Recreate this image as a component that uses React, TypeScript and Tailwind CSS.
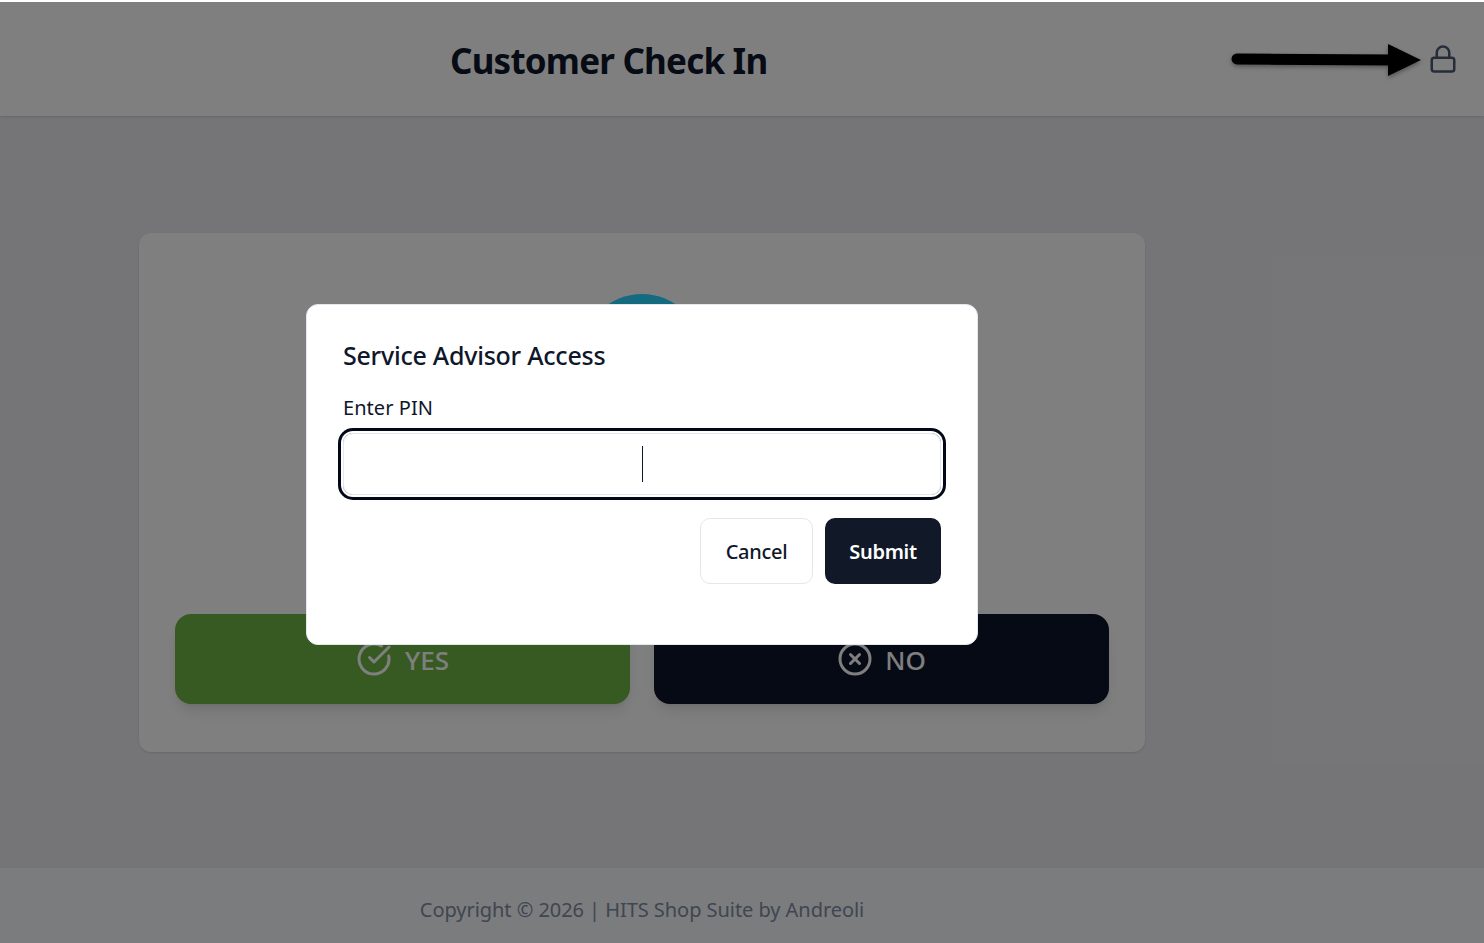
import React from 'react';
import { CircleCheckBig, CircleX, Lock } from 'lucide-react';

const FONT = "font-['Noto_Sans','Open_Sans',sans-serif]";

export default function App() {
  return (
    <div className={`relative w-[1484px] h-[943px] overflow-hidden flex flex-col bg-[#ebebef] ${FONT}`}>
      {/* page under the dialog */}
      <header className="h-[116px] shrink-0 flex items-center justify-between bg-white pl-[450px] pr-[26px] shadow-sm">
        <h1 className="text-[35px] font-bold leading-none text-[#0f172a] tracking-[-0.8px] pt-1">Customer Check In</h1>
        <Lock className="w-[30px] h-[30px] mt-[2px] text-[#4b5a70]" strokeWidth={2} />
      </header>

      <main className="flex-1 pl-[139px] pt-[117px]">
        <div className="w-[1006px] h-[519px] rounded-xl bg-white shadow-sm flex flex-col px-9 pb-12 pt-[61px]">
          <div className="self-center w-[120px] h-[120px] rounded-full bg-[#28d6ff]" />
          <div className="mt-auto grid grid-cols-2 gap-6">
            <button className="h-[90px] rounded-2xl bg-[#6eb444] text-white text-[26px] font-medium shadow-lg flex items-center justify-center gap-[13px]">
              <CircleCheckBig className="w-9 h-9" strokeWidth={2} />
              <span className="pt-[2px]">YES</span>
            </button>
            <button className="h-[90px] rounded-2xl bg-[#0c1428] text-white text-[26px] font-medium shadow-lg flex items-center justify-center gap-3">
              <CircleX className="w-9 h-9" strokeWidth={2} />
              <span className="pt-[2px]">NO</span>
            </button>
          </div>
        </div>
      </main>

      <footer className="h-[75px] shrink-0 w-full bg-[#f7f8fa]">
        <p className="w-[1284px] h-full flex items-center justify-center text-[20px] text-[#7f8ca3] tracking-[-0.05px] pt-2">
          Copyright © 2026 | HITS Shop Suite by Andreoli
        </p>
      </footer>

      {/* dim layer and dialog */}
      <div className="absolute inset-0 top-[2px] bg-black/50 pl-[306px] pt-[302px]">
        <div className="w-[672px] h-[341px] rounded-xl bg-white border border-slate-200 pt-[32px] pl-[36px] pr-[36px]">
          <h2 className="text-[25px] font-medium leading-9 text-[#0f172a] tracking-[-0.24px]">Service Advisor Access</h2>
          <label className="block mt-[23px] text-[20px] leading-6 text-[#0f172a] tracking-[0.05px]">Enter PIN</label>
          <div className="mt-[13px] h-[62px] rounded-[10px] border border-slate-200 ring-[3px] ring-[#020817] ring-offset-2 flex items-center justify-center">
            <div className="w-px h-9 bg-[#0f172a]" />
          </div>
          <div className="mt-[23px] flex justify-end gap-3">
            <button className="w-[113px] h-[66px] rounded-[10px] border border-slate-200 bg-white pt-[2px] text-[20px] font-medium text-[#0f172a] tracking-[-0.3px]">Cancel</button>
            <button className="w-[116px] h-[66px] rounded-[10px] bg-[#111827] pt-[2px] text-[20px] font-semibold text-white tracking-[-0.3px]">Submit</button>
          </div>
        </div>
      </div>

      {/* annotation arrow */}
      <svg className="absolute left-[1225px] top-[38px] w-[205px] h-[45px] drop-shadow-[0_2px_2px_rgba(0,0,0,0.35)]" viewBox="0 0 205 45">
        <path d="M12 21 L170 22" stroke="#000" strokeWidth="11" strokeLinecap="round" fill="none" />
        <path d="M163 6 L196 22 L163 38 Z" fill="#000" />
      </svg>
    </div>
  );
}
